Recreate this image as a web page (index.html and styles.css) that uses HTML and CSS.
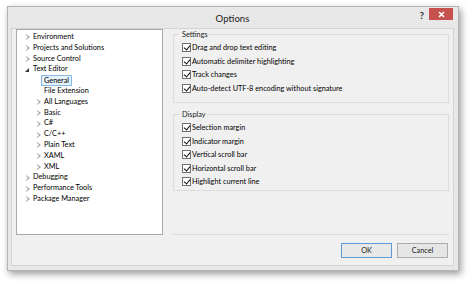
FILE: index.html
```html
<!DOCTYPE html>
<html>
<head>
<meta charset="utf-8">
<link rel="stylesheet" href="styles.css">
</head>
<body>
<div class="window">
  <div class="titlebar">
    <span class="title">Options</span>
    <span class="help">?</span>
    <span class="close"><svg width="7" height="7" viewBox="0 0 7 7"><path d="M1 1L6 6M6 1L1 6" stroke="#fff" stroke-width="1.6"/></svg></span>
  </div>
  <div class="client">
    <div class="main">
      <div class="tree">
        <div class="node l1"><span class="arr"></span>Environment</div>
        <div class="node l1"><span class="arr"></span>Projects and Solutions</div>
        <div class="node l1"><span class="arr"></span>Source Control</div>
        <div class="node l1"><span class="arr open"></span>Text Editor</div>
        <div class="node l2"><span class="noarr"></span><span class="sel">General</span></div>
        <div class="node l2"><span class="noarr"></span>File Extension</div>
        <div class="node l2"><span class="arr"></span>All Languages</div>
        <div class="node l2"><span class="arr"></span>Basic</div>
        <div class="node l2"><span class="arr"></span>C#</div>
        <div class="node l2"><span class="arr"></span>C/C++</div>
        <div class="node l2"><span class="arr"></span>Plain Text</div>
        <div class="node l2"><span class="arr"></span>XAML</div>
        <div class="node l2"><span class="arr"></span>XML</div>
        <div class="node l1"><span class="arr"></span>Debugging</div>
        <div class="node l1"><span class="arr"></span>Performance Tools</div>
        <div class="node l1"><span class="arr"></span>Package Manager</div>
      </div>
      <div class="page">
        <fieldset class="group settings">
          <legend>Settings</legend>
          <label class="cb"><span class="box"></span>Drag and drop text editing</label>
          <label class="cb"><span class="box"></span>Automatic delimiter highlighting</label>
          <label class="cb"><span class="box"></span>Track changes</label>
          <label class="cb"><span class="box"></span>Auto-detect UTF-8 encoding without signature</label>
        </fieldset>
        <fieldset class="group display">
          <legend>Display</legend>
          <label class="cb"><span class="box"></span>Selection margin</label>
          <label class="cb"><span class="box"></span>Indicator margin</label>
          <label class="cb"><span class="box"></span>Vertical scroll bar</label>
          <label class="cb"><span class="box"></span>Horizontal scroll bar</label>
          <label class="cb"><span class="box"></span>Highlight current line</label>
        </fieldset>
      </div>
    </div>
    <div class="buttons">
      <button class="btn ok">OK</button>
      <button class="btn">Cancel</button>
    </div>
  </div>
</div>
</body>
</html>
```
FILE: styles.css
```css
* { box-sizing: border-box; }
html, body { margin: 0; padding: 0; background: #ffffff; }
body { width: 474px; height: 284px; overflow: hidden; font-family: Lato, "Open Sans", sans-serif; color: #000; }

.window {
  margin: 6px 0 0 7px;
  width: 452px;
  height: 265px;
  background: #e8e8e8;
  border: 1px solid #b4b4b4;
  padding: 0 4px 4px 3px;
  display: flex;
  flex-direction: column;
  box-shadow: 2px 3px 7px rgba(0,0,0,0.4);
}

.titlebar {
  height: 21px;
  position: relative;
  display: flex;
  align-items: center;
  justify-content: center;
  flex: none;
}
.title { font-size: 9.6px; color: #222; margin-top: 1px; }
.help { position: absolute; right: 30px; top: 2px; font-size: 10px; font-weight: bold; color: #333; }
.close {
  position: absolute; right: 1px; top: 1px;
  width: 24px; height: 12px;
  background: #c7514f;
  display: flex; align-items: center; justify-content: center;
}

.client {
  flex: 1;
  background: #f0f0f0;
  border: 1px solid #d4d4d4;
  display: flex;
  flex-direction: column;
  padding: 0 4px 0 4px;
}

.main { display: flex; height: 206px; }

.tree {
  width: 147px;
  height: 206px;
  background: #ffffff;
  border: 1px solid #a9a9a9;
  padding: 2px 0 0 0;
  font-size: 7.3px;
  flex: none;
}
.node { height: 10.8px; line-height: 10.8px; display: flex; align-items: center; white-space: nowrap; }
.l1 { padding-left: 8px; }
.l2 { padding-left: 19px; }
.arr, .noarr { width: 8px; height: 6px; flex: none; position: relative; }
.arr::before {
  content: ""; position: absolute; left: 1px; top: 0;
  border-left: 4px solid #a6a6a6; border-top: 3px solid transparent; border-bottom: 3px solid transparent;
}
.arr::after {
  content: ""; position: absolute; left: 1px; top: 1px;
  border-left: 2px solid #fff; border-top: 2px solid transparent; border-bottom: 2px solid transparent;
}
.arr.open::before {
  left: 0; top: 1px;
  border: none;
  width: 0; height: 0;
  border-right: 4px solid #333; border-top: 4px solid transparent;
}
.arr.open::after { display: none; }
.sel {
  border: 1px solid #84b9e9;
  background: #e5f3fb;
  padding: 0 2px;
  margin-left: -3px;
  line-height: 9px;
}

.page {
  flex: 1;
  margin-left: 10px;
  margin-right: 0;
  border-bottom: 1px solid #dcdcdc;
  display: flex;
  flex-direction: column;
}

.group {
  margin: 0;
  padding: 2px 0 3px 8px;
  border: 1px solid #dcdcdc;
  border-radius: 0;
  font-size: 7.3px;
}
.group legend { padding: 0 0 0 3px; margin-left: -3px; font-size: 7.3px; color: #222; }
.settings { margin-top: 1px; height: 73px; }
.display { margin-top: 7px; height: 81px; }

.cb { display: flex; align-items: center; height: 13.5px; white-space: nowrap; }
.box {
  width: 9px; height: 9px; margin-right: 1px; flex: none;
  border: 1px solid #707070; background: #fff; position: relative;
}
.box::after {
  content: ""; position: absolute; left: 2px; top: 0px;
  width: 3px; height: 5px;
  border-right: 1.6px solid #111; border-bottom: 1.6px solid #111;
  transform: rotate(40deg);
}

.buttons { display: flex; justify-content: flex-end; gap: 5px; padding: 8px 1px 0 0; }
.btn {
  width: 51px; height: 15px;
  font-family: inherit; font-size: 7.3px; color: #222;
  background: #e6e6e6;
  border: 1px solid #acacac;
  padding: 0; margin: 0;
}
.btn.ok { border-color: #5d9ad6; background: #e8e8e8; }
```
